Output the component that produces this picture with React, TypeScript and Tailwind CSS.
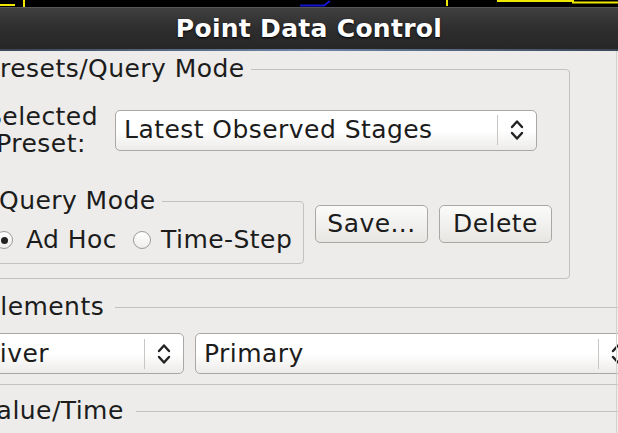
function Chevrons() {
  return (
    <svg width="14" height="24" viewBox="0 0 14 24" fill="none" stroke="#222" strokeWidth="2.4" strokeLinecap="round" strokeLinejoin="round">
      <path d="M2 9 L7 3.5 L12 9" />
      <path d="M2 15 L7 20.5 L12 15" />
    </svg>
  );
}

function Combo({ label, className }: { label: string; className: string }) {
  return (
    <div
      className={`flex h-[41px] shrink-0 items-center rounded-[5px] border border-[#a9a8a5] bg-gradient-to-b from-white via-white to-[#ecebe9] ${className}`}
    >
      <span className="flex-1 truncate pl-[8px]">{label}</span>
      <div className="h-[30px] w-px bg-[#c8c7c4]" />
      <div className="flex w-[38px] items-center justify-center">
        <Chevrons />
      </div>
    </div>
  );
}

function Radio({ checked }: { checked?: boolean }) {
  return (
    <span className="flex h-[18px] w-[18px] shrink-0 items-center justify-center rounded-full border border-[#9c9b98] bg-gradient-to-b from-white to-[#efeeec]">
      {checked && <span className="h-[7px] w-[7px] rounded-full bg-[#222]" />}
    </span>
  );
}

function Button({ label }: { label: string }) {
  return (
    <button className="flex h-[38px] w-[113px] shrink-0 items-center justify-center rounded-[5px] border border-[#a9a8a5] bg-gradient-to-b from-[#fbfbfa] to-[#e7e6e3] text-[#1c1c1c]">
      {label}
    </button>
  );
}

function SectionHeader({ label, pad, gap }: { label: string; pad: string; gap: string }) {
  return (
    <div className={`flex h-[28px] items-center ${pad}`}>
      <span className="shrink-0">{label}</span>
      <div className={`h-px flex-1 bg-[#c2c1be] ${gap}`} />
    </div>
  );
}

export default function App() {
  return (
    <div className="relative h-[433px] w-[618px] overflow-hidden bg-[#edecea] font-['DejaVu_Sans',sans-serif] text-[25px] leading-[28px] tracking-[0.45px] text-[#1c1c1c]">
      {/* plot strip behind the dialog */}
      <div className="h-[7px] bg-black">
        <svg width="618" height="7" viewBox="0 0 618 7" fill="none">
          <path d="M0 5 H15" stroke="#f0e800" strokeWidth="2" />
          <path d="M24 0 V7" stroke="#f0e800" strokeWidth="2" />
          <path d="M300 5.5 H324 L330 1" stroke="#1414d0" strokeWidth="2" />
          <path d="M447 0 V6" stroke="#f0e800" strokeWidth="2" />
          <path d="M497 1 H573 V2.5 H618" stroke="#f0e800" strokeWidth="2" />
        </svg>
      </div>

      {/* title bar */}
      <div className="flex h-[42px] items-center justify-center border-t border-[#575757] bg-gradient-to-b from-[#404040] via-[#2e2e2e] to-[#262626] font-bold tracking-[0.3px] text-white [text-shadow:0_1px_2px_#000]">
        Point Data Control
      </div>
      <div className="h-[2px] bg-gradient-to-r from-[#3b4656] via-[#6f86a6] to-[#3b4656]" />

      <div className="-ml-[24px] w-[680px]">
        <fieldset className="mt-[4px] w-[594px] rounded-[4px] border border-[#c2c1be] pb-[14px]">
          <legend className="ml-[2px] px-[6px]">Presets/Query Mode</legend>

          <div className="flex items-center pl-[9px] pt-[20px]">
            <div className="w-[110px] shrink-0 text-center leading-[27px]">
              Selected
              <br />
              Preset:
            </div>
            <Combo label="Latest Observed Stages" className="ml-[19px] w-[422px]" />
          </div>

          <div className="mt-[30px] flex items-center pl-[13px]">
            <fieldset className="w-[314px] shrink-0 rounded-[4px] border border-[#c2c1be] pb-[9px]">
              <legend className="ml-[2px] px-[6px]">Query Mode</legend>
              <div className="flex items-center pl-[4px] pt-[11px]">
                <Radio checked />
                <span className="ml-[13px]">Ad Hoc</span>
                <span className="ml-[16px]">
                  <Radio />
                </span>
                <span className="ml-[10px]">Time-Step</span>
              </div>
            </fieldset>
            <div className="mb-[4px] ml-[11px] flex gap-[11px]">
              <Button label="Save..." />
              <Button label="Delete" />
            </div>
          </div>
        </fieldset>

        <div className="mt-[14px]">
          <SectionHeader label="Elements" pad="pl-[8px]" gap="ml-[11px]" />
        </div>

        <div className="mt-[12px] flex">
          <Combo label="River" className="-ml-[3px] w-[211px]" />
          <Combo label="Primary" className="ml-[11px] w-[443px]" />
        </div>

        <div className="mt-[10px] h-px bg-[#c2c1be]" />

        <div className="mt-[12px]">
          <SectionHeader label="Value/Time" pad="pl-[5px]" gap="ml-[12px]" />
        </div>
      </div>

      {/* pane edge on the right */}
      <div className="pointer-events-none absolute bottom-0 left-[616px] top-[51px] w-px bg-[#d3d2cf]" />
    </div>
  );
}
